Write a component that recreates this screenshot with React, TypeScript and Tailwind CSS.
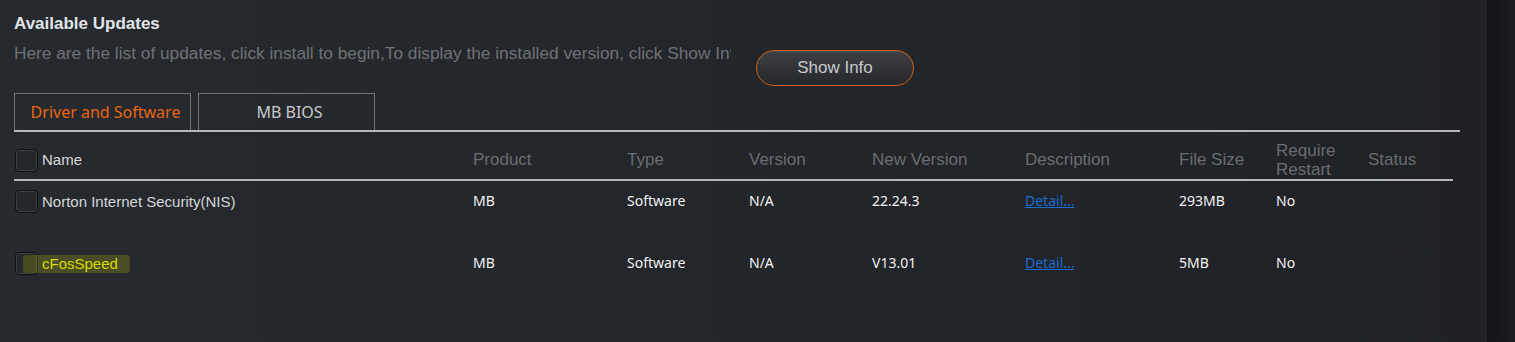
import React from "react";

const arial = "font-['Liberation_Sans',Arial,sans-serif]";
const segoe = "font-['Noto_Sans',sans-serif]";

const cols =
  "grid grid-cols-[459px_154px_122px_123px_153px_154px_97px_92px_1fr] items-center";

type Row = {
  name: string;
  product: string;
  type: string;
  version: string;
  newVersion: string;
  size: string;
  restart: string;
  marked?: boolean;
};

const rows: Row[] = [
  {
    name: "Norton Internet Security(NIS)",
    product: "MB",
    type: "Software",
    version: "N/A",
    newVersion: "22.24.3",
    size: "293MB",
    restart: "No",
  },
  {
    name: "cFosSpeed",
    product: "MB",
    type: "Software",
    version: "N/A",
    newVersion: "V13.01",
    size: "5MB",
    restart: "No",
    marked: true,
  },
];

function Checkbox() {
  return (
    <div className="w-[23px] h-[23px] rounded-[4px] border border-[#111214] bg-[#24272b] shadow-[inset_0_0_0_1px_#3b3e43] shrink-0" />
  );
}

function Cell({ children }: { children: React.ReactNode }) {
  return (
    <span className={`${segoe} text-[14px] leading-[22px] text-[#f2f2f2]`}>
      {children}
    </span>
  );
}

function UpdateRow({ row }: { row: Row }) {
  return (
    <div className={`${cols} h-[62px] items-start pt-[9px]`}>
      <div className="relative flex items-center gap-[4px] pl-px">
        <Checkbox />
        <span
          className={`${arial} text-[15px] leading-[22px] ${
            row.marked ? "text-[#d6da00]" : "text-[#d4d6d8]"
          }`}
        >
          {row.name}
        </span>
        {row.marked && (
          <div className="absolute left-[9px] top-[3px] w-[107px] h-[18px] rounded-[3px] bg-[#dcdc00]/20 pointer-events-none" />
        )}
      </div>
      <Cell>{row.product}</Cell>
      <Cell>{row.type}</Cell>
      <Cell>{row.version}</Cell>
      <Cell>{row.newVersion}</Cell>
      <a
        href="#"
        className={`${segoe} text-[14px] leading-[22px] text-[#1b6dd2] underline`}
      >
        Detail...
      </a>
      <Cell>{row.size}</Cell>
      <Cell>{row.restart}</Cell>
      <div />
    </div>
  );
}

export default function App() {
  return (
    <div className="w-[1515px] h-[342px] flex overflow-hidden bg-linear-to-r from-[#262a2f] to-[#1f2125]">
      <div className="flex-1 pl-[14px] pt-[14px]">
        <h2
          className={`${arial} font-bold text-[17px] leading-[20px] text-[#e0e4e8]`}
        >
          Available Updates
        </h2>

        <div className="flex items-start gap-[25px] mt-[9px]">
          <p
            className={`${arial} w-[717px] overflow-hidden whitespace-nowrap text-[17.3px] leading-[20px] text-[#6e7176]`}
          >
            Here are the list of updates, click install to begin,To display the
            installed version, click Show Info
          </p>
          <button
            type="button"
            className={`${arial} mt-[7px] w-[158px] h-[36px] rounded-full border border-[#d0600e] bg-linear-to-b from-[#3e4045] to-[#25272b] text-[17px] text-[#c6c8ca] shadow-[inset_0_1px_0_#4a4c51]`}
          >
            Show Info
          </button>
        </div>

        <div className="flex gap-[7px] mt-[7px]">
          <div
            className={`${segoe} w-[177px] h-[37px] flex items-center justify-center pl-[6px] border border-b-0 border-[#6f7277] text-[16px] text-[#e8650f]`}
          >
            Driver and Software
          </div>
          <div
            className={`${segoe} w-[177px] h-[37px] flex items-center justify-center pl-[6px] border border-b-0 border-[#6f7277] text-[16px] text-[#c8cacc]`}
          >
            MB BIOS
          </div>
        </div>
        <div className="w-[1446px] h-[2px] bg-[#b6b7b8]" />

        <div className="w-[1439px]">
          <div className={`${cols} h-[47px] pt-[9px]`}>
            <div className="flex items-center gap-[4px] pl-px">
              <Checkbox />
              <span className={`${arial} text-[15px] text-[#d8dadc]`}>Name</span>
            </div>
            {["Product", "Type", "Version", "New Version", "Description", "File Size"].map(
              (h) => (
                <span key={h} className={`${arial} text-[17px] text-[#6a6d72]`}>
                  {h}
                </span>
              )
            )}
            <span
              className={`${arial} text-[17px] leading-[19px] text-[#6a6d72]`}
            >
              Require
              <br />
              Restart
            </span>
            <span className={`${arial} text-[17px] text-[#6a6d72]`}>Status</span>
          </div>
          <div className="h-[2px] bg-[#b6b7b8]" />
          {rows.map((r) => (
            <UpdateRow key={r.name} row={r} />
          ))}
        </div>
      </div>
      <div className="w-[28px] bg-linear-to-r from-[#131416] to-[#1c1d20]" />
    </div>
  );
}
